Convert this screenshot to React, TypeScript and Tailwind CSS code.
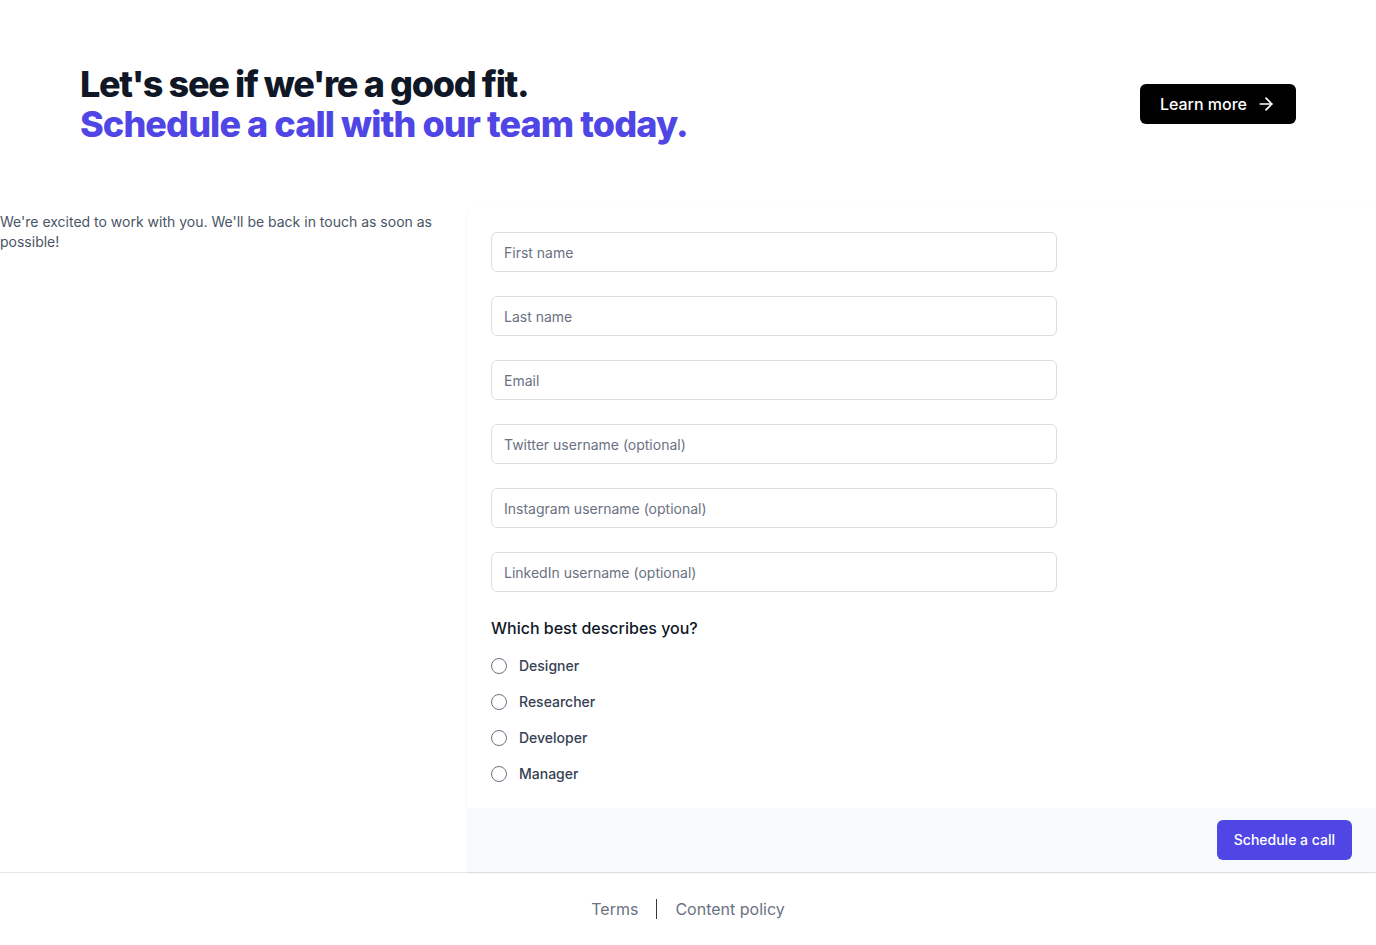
import { ArrowRight } from 'lucide-react';

const fields = [
  'First name',
  'Last name',
  'Email',
  'Twitter username (optional)',
  'Instagram username (optional)',
  'LinkedIn username (optional)',
];

const roles = ['Designer', 'Researcher', 'Developer', 'Manager'];

export default function App() {
  return (
    <div className="min-h-screen bg-white font-['Inter',sans-serif] text-gray-900">
      {/* Hero */}
      <header className="flex items-center justify-between px-20 py-16">
        <h2 className="text-4xl font-extrabold leading-10 tracking-tight">
          <span className="block tracking-[-0.037em] text-gray-900">Let's see if we're a good fit.</span>
          <span className="block text-[#4f46e5]">Schedule a call with our team today.</span>
        </h2>
        <button className="flex h-10 items-center gap-[9px] rounded-md bg-black px-5 text-base font-medium text-white">
          Learn more
          <ArrowRight className="h-5 w-5" strokeWidth={2} />
        </button>
      </header>

      {/* Form section */}
      <main className="flex">
        <div className="w-[467px] shrink-0 pr-8 pt-1">
          <p className="text-sm leading-5 text-gray-600">
            We're excited to work with you. We'll be back in touch as soon as possible!
          </p>
        </div>

        <form className="flex-1 overflow-hidden rounded-tl-md shadow-[0_0_2px_rgba(0,0,0,0.06),0_1px_2px_rgba(0,0,0,0.04)]">
          <div className="bg-white px-6 pb-6 pt-6">
            <div className="flex w-[566px] flex-col gap-6">
              {fields.map((f) => (
                <input
                  key={f}
                  type="text"
                  placeholder={f}
                  className="h-10 w-full rounded-md border border-gray-300/80 px-3 text-sm text-gray-900 placeholder:text-gray-500 focus:outline-none"
                />
              ))}
            </div>

            <fieldset className="mt-6">
              <legend className="text-base font-medium leading-6 text-gray-900">
                Which best describes you?
              </legend>
              <div className="mt-4 flex flex-col gap-4">
                {roles.map((r) => (
                  <label key={r} className="flex items-center gap-3">
                    <span className="h-4 w-4 rounded-full border border-gray-500 bg-white" />
                    <span className="text-sm font-medium leading-5 text-gray-700">{r}</span>
                  </label>
                ))}
              </div>
            </fieldset>
          </div>

          <div className="flex justify-end bg-gray-50 px-6 py-3">
            <button
              type="button"
              className="h-10 rounded-md bg-[#4f46e5] px-[17px] text-sm font-medium text-white"
            >
              Schedule a call
            </button>
          </div>
        </form>
      </main>

      {/* Footer */}
      <footer className="flex items-center justify-center gap-[18px] border-t border-gray-200 py-6">
        <a className="text-base leading-6 text-gray-500">Terms</a>
        <span className="h-5 w-px bg-[#3a3a2a]" />
        <a className="text-base leading-6 text-gray-500">Content policy</a>
      </footer>
    </div>
  );
}
